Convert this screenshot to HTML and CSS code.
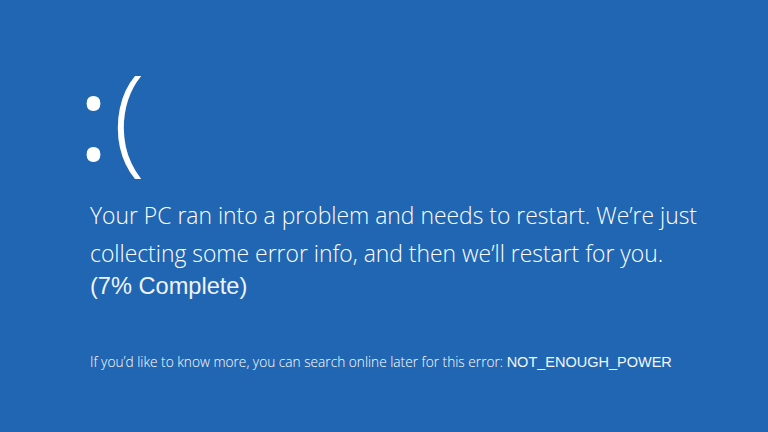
FILE: index.html
```html
<!DOCTYPE html>
<html lang="en">
<head>
<meta charset="utf-8">
<link rel="stylesheet" href="styles.css">
</head>
<body>
<main class="screen">
  <div class="face"><span class="colon">:</span>(</div>
  <p class="message">Your PC ran into a problem and needs to restart. We’re just<br>collecting some error info, and then we’ll restart for you.</p>
  <p class="progress">(7% Complete)</p>
  <p class="more">If you’d like to know more, you can search online later for this error: <span class="code">NOT_ENOUGH_POWER</span></p>
</main>
</body>
</html>
```
FILE: styles.css
```css
html, body {
  margin: 0;
  padding: 0;
  width: 768px;
  height: 432px;
  overflow: hidden;
  background: #2166b2;
}
.screen {
  box-sizing: border-box;
  width: 768px;
  height: 432px;
  padding: 45px 0 0 84px;
  color: #ffffff;
  font-family: "Open Sans", "Noto Sans", sans-serif;
  font-weight: 300;
}
.face {
  margin-left: -6px;
  font-size: 118px;
  line-height: 140px;
  font-weight: 300;
}
.colon {
  font-weight: 400;
  margin-right: 4px;
}
.message {
  margin: 12px 0 0 6px;
  font-size: 22.9px;
  line-height: 38px;
}
.progress {
  margin: 0 0 0 6px;
  font-family: "Liberation Sans", Arial, sans-serif;
  font-weight: 400;
  font-size: 23.6px;
  line-height: 26px;
  color: #eef3fa;
}
.more {
  margin: 54px 0 0 6px;
  font-size: 13.7px;
  line-height: 18px;
}
.code {
  font-family: "Liberation Sans", Arial, sans-serif;
  font-weight: 400;
  font-size: 14.5px;
  color: #f2f6fb;
}
```
